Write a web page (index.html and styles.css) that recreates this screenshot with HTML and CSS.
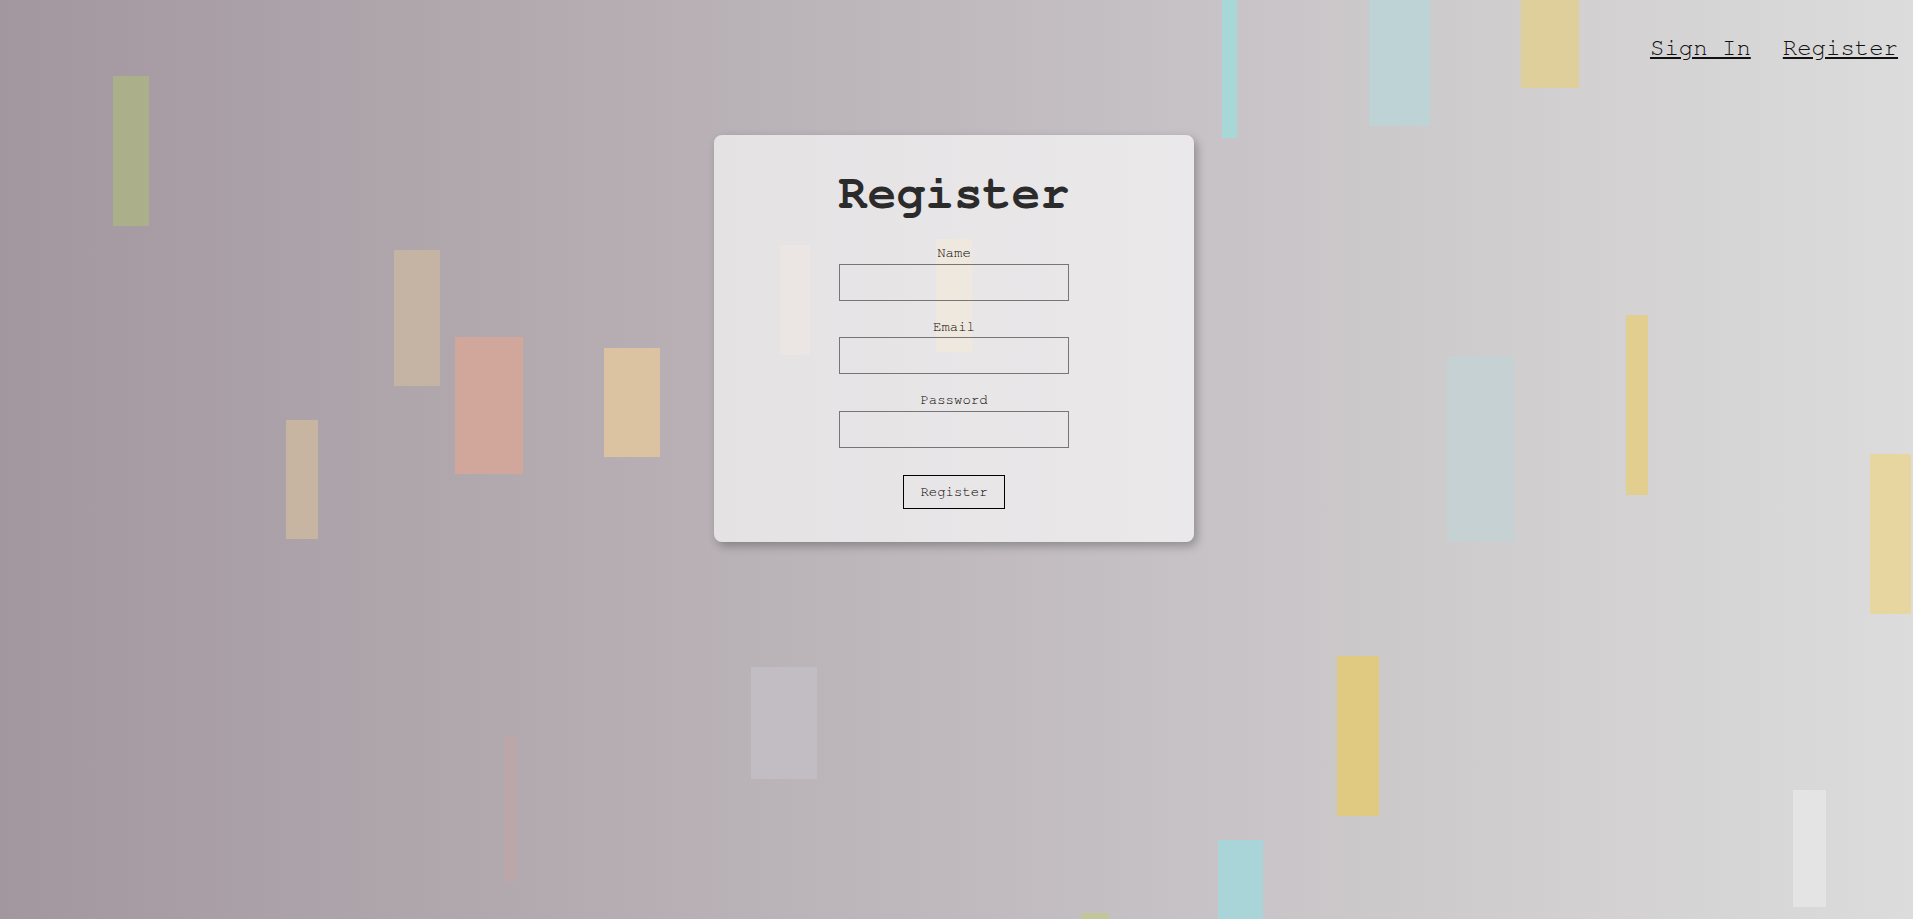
FILE: index.html
```html
<!DOCTYPE html>
<html lang="en">
<head>
<meta charset="utf-8">
<title>Register</title>
<link rel="stylesheet" href="styles.css">
</head>
<body>
<div class="backdrop" aria-hidden="true">
  <div class="bar b-green"></div>
  <div class="bar b-tan1"></div>
  <div class="bar b-salmon"></div>
  <div class="bar b-tan2"></div>
  <div class="bar b-peach"></div>
  <div class="bar b-hidden1"></div>
  <div class="bar b-hidden2"></div>
  <div class="bar b-teal1"></div>
  <div class="bar b-lightblue"></div>
  <div class="bar b-yellowtop"></div>
  <div class="bar b-yellowthin"></div>
  <div class="bar b-bluegray"></div>
  <div class="bar b-yellowright"></div>
  <div class="bar b-gold"></div>
  <div class="bar b-lightgray"></div>
  <div class="bar b-pink"></div>
  <div class="bar b-tealbottom"></div>
  <div class="bar b-greensmall"></div>
  <div class="bar b-white"></div>
</div>

<header class="topnav">
  <a href="#" class="navlink">Sign In</a>
  <a href="#" class="navlink">Register</a>
</header>

<main class="page">
  <form class="card">
    <h1 class="card-title">Register</h1>
    <div class="field">
      <label class="field-label" for="name">Name</label>
      <input class="field-input" id="name" type="text">
    </div>
    <div class="field">
      <label class="field-label" for="email">Email</label>
      <input class="field-input" id="email" type="email">
    </div>
    <div class="field">
      <label class="field-label" for="password">Password</label>
      <input class="field-input" id="password" type="password">
    </div>
    <button class="submit" type="button">Register</button>
  </form>
</main>
</body>
</html>
```
FILE: styles.css
```css
* { box-sizing: border-box; }

html, body {
  margin: 0;
  height: 100%;
}

body {
  position: relative;
  overflow: hidden;
  font-family: FreeMono, "Liberation Mono", "Courier New", monospace;
  color: #111;
  background: linear-gradient(to right, #a3979f 0%, #dcdcdc 100%);
}

/* decorative canvas of bars */
.backdrop {
  position: absolute;
  inset: 0;
  z-index: 0;
  pointer-events: none;
}
.bar { position: absolute; }
.b-green      { left: 113px;  top: 76px;  width: 36px; height: 150px; background: #abaf8a; }
.b-tan1       { left: 394px;  top: 250px; width: 46px; height: 136px; background: #c5b4a4; }
.b-salmon     { left: 455px;  top: 337px; width: 68px; height: 137px; background: #d2a79b; }
.b-tan2       { left: 286px;  top: 420px; width: 32px; height: 119px; background: #c7b4a1; }
.b-peach      { left: 604px;  top: 348px; width: 56px; height: 109px; background: #dbc3a1; }
.b-hidden1    { left: 780px;  top: 245px; width: 30px; height: 110px; background: #c9bcb4; }
.b-hidden2    { left: 936px;  top: 239px; width: 36px; height: 113px; background: #d3c2a8; }
.b-teal1      { left: 1222px; top: 0;     width: 15px; height: 138px; background: #a8d7d7; }
.b-lightblue  { left: 1369px; top: 0;     width: 61px; height: 126px; background: #bed3d6; }
.b-yellowtop  { left: 1521px; top: 0;     width: 58px; height: 88px;  background: #dfcf9a; }
.b-yellowthin { left: 1626px; top: 315px; width: 22px; height: 180px; background: #e2cf90; }
.b-bluegray   { left: 1447px; top: 356px; width: 67px; height: 186px; background: #c5d1d3; }
.b-yellowright{ left: 1870px; top: 454px; width: 41px; height: 160px; background: #e7d69f; }
.b-gold       { left: 1337px; top: 656px; width: 42px; height: 160px; background: #e0c981; }
.b-lightgray  { left: 751px;  top: 667px; width: 66px; height: 112px; background: #c2bdc2; }
.b-pink       { left: 504px;  top: 736px; width: 13px; height: 146px; background: #bba7aa; }
.b-tealbottom { left: 1218px; top: 840px; width: 45px; height: 79px;  background: #a9d5d8; }
.b-greensmall { left: 1081px; top: 913px; width: 28px; height: 6px;   background: #c2c69b; }
.b-white      { left: 1793px; top: 790px; width: 33px; height: 117px; background: #e4e4e4; }

/* top navigation */
.topnav {
  position: relative;
  z-index: 1;
  display: flex;
  justify-content: flex-end;
  gap: 32px;
  padding: 35px 15px 0 0;
  height: 61px;
}
.navlink {
  font-size: 24px;
  line-height: 26px;
  color: #111;
  text-decoration: underline;
}

/* main area */
.page {
  position: relative;
  z-index: 1;
  display: flex;
  justify-content: center;
  padding: 74px 5px 0 0;
}

.card {
  width: 480px;
  padding: 32px 32px 33px;
  background: rgba(255, 255, 255, 0.63);
  border-radius: 8px;
  box-shadow: 3px 4px 10px rgba(0, 0, 0, 0.28);
  display: flex;
  flex-direction: column;
  align-items: center;
}

.card-title {
  margin: 0 0 24px;
  font-size: 48px;
  line-height: 54px;
  font-weight: bold;
  color: #2b2b2b;
}

.field {
  display: flex;
  flex-direction: column;
  align-items: center;
  margin-bottom: 18px;
}
.field:last-of-type { margin-bottom: 27px; }

.field-label {
  font-size: 14px;
  line-height: 16px;
  margin-bottom: 2.5px;
  color: #000;
}

.field-input {
  width: 230px;
  height: 37px;
  border: 1px solid #767676;
  border-radius: 0;
  background: transparent;
  font-family: inherit;
  font-size: 14px;
  padding: 0 6px;
}

.submit {
  font-family: inherit;
  font-size: 14px;
  line-height: 16px;
  padding: 8px 16px;
  border: 1px solid #000;
  border-radius: 0;
  background: transparent;
  color: #000;
}
```
